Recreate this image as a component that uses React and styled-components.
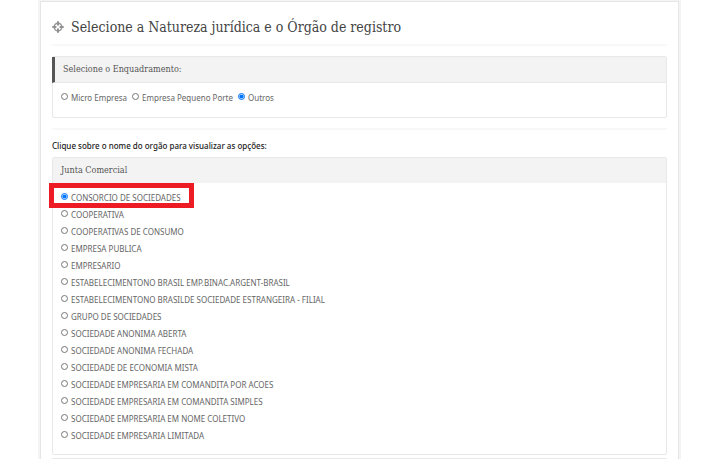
import React, { useState } from 'react'
import styled, { createGlobalStyle } from 'styled-components'

const GlobalStyle = createGlobalStyle`
    * {
        box-sizing: border-box;
    }

    body {
        margin: 0;
        background: white;
        color: #666;
        font-family: 'Noto Sans', 'Open Sans', sans-serif;
        font-size: 8px;
        line-height: 17px;
        overflow: hidden;
    }
`

const Page = styled.div`
    padding: 1px 41px 0px 40px;
`

const Card = styled.main`
    border: 1px solid #e6e6e6;
    box-shadow: 0 0 0 2px #f4f4f4;
    background: white;
    padding: 0px 11px;
`

const Header = styled.header`
    display: flex;
    align-items: center;
    gap: 7px;
    height: 42px;
    padding-top: 8px;
`

const Title = styled.h1`
    margin: 0;
    color: #444;
    font-family: 'DejaVu Serif Condensed', 'DejaVu Serif', serif;
    font-size: 14px;
    font-weight: 400;
    line-height: 17px;
`

const Divider = styled.hr`
    height: 2px;
    margin: ${props => props.$gap || 0}px 0 0 0;
    border: none;
    background: #f8f8f8;
`

const Panel = styled.section`
    margin-top: ${props => props.$gap}px;
    border: 1px solid #e8e8e8;
    border-radius: 2px;
`

const PanelTitle = styled.h2`
    margin: ${props => (props.$accent ? '0 0 0 -1px' : '0')};
    padding: 4px 8px;
    background: #f3f3f3;
    border-left: ${props => (props.$accent ? '3px solid #555' : 'none')};
    border-bottom: ${props => (props.$accent ? '1px solid #e8e8e8' : 'none')};
    color: #555;
    font-family: 'DejaVu Serif Condensed', 'DejaVu Serif', serif;
    font-size: 9px;
    font-weight: 400;
    line-height: 17px;
`

const Choices = styled.div`
    display: flex;
    gap: 5px;
    padding: 6px 8px 11px 8px;
`

const OptionList = styled.ul`
    list-style: none;
    margin: 0;
    padding: 6px 8px 10px 8px;
`

const OptionItem = styled.li`
    position: relative;
    display: flex;
`

const Option = styled.label`
    display: flex;
    align-items: center;
    gap: 3px;
    white-space: nowrap;
`

const Radio = styled.input`
    width: 7px;
    height: 7px;
    margin: 0 0 2px 0;
`

const Highlight = styled.span`
    position: absolute;
    top: -6px;
    left: -12px;
    width: 145px;
    height: 25px;
    border: 5px solid #ed1c24;
    pointer-events: none;
`

const Instruction = styled.p`
    margin: 7px 0 0 0;
    color: #222;
    font-weight: 500;
`

const sizes = ['Micro Empresa', 'Empresa Pequeno Porte', 'Outros']

const natures = [
    'CONSORCIO DE SOCIEDADES',
    'COOPERATIVA',
    'COOPERATIVAS DE CONSUMO',
    'EMPRESA PUBLICA',
    'EMPRESARIO',
    'ESTABELECIMENTONO BRASIL EMP.BINAC.ARGENT-BRASIL',
    'ESTABELECIMENTONO BRASILDE SOCIEDADE ESTRANGEIRA - FILIAL',
    'GRUPO DE SOCIEDADES',
    'SOCIEDADE ANONIMA ABERTA',
    'SOCIEDADE ANONIMA FECHADA',
    'SOCIEDADE DE ECONOMIA MISTA',
    'SOCIEDADE EMPRESARIA EM COMANDITA POR ACOES',
    'SOCIEDADE EMPRESARIA EM COMANDITA SIMPLES',
    'SOCIEDADE EMPRESARIA EM NOME COLETIVO',
    'SOCIEDADE EMPRESARIA LIMITADA',
]

const CrosshairIcon = () => (
    <svg width='12' height='12' viewBox='0 0 12 12' fill='none' stroke='#929292' aria-hidden='true'>
        <circle cx='6' cy='6' r='3.8' strokeWidth='1.4' />
        <path d='M6 0.3V4.4M6 7.6V11.7M0.3 6H4.4M7.6 6H11.7' strokeWidth='2' />
    </svg>
)

const RadioOption = ({ name, value, selected, onSelect }) => (
    <Option>
        <Radio
            type='radio'
            name={name}
            value={value}
            checked={selected === value}
            onChange={() => onSelect(value)}
        />
        {value}
    </Option>
)

const App = () => {
    const [size, setSize] = useState('Outros')
    const [nature, setNature] = useState(natures[0])

    return (
        <>
            <GlobalStyle />
            <Page>
                <Card>
                    <Header>
                        <CrosshairIcon />
                        <Title>Selecione a Natureza jurídica e o Órgão de registro</Title>
                    </Header>
                    <Divider />

                    <Panel $gap={10}>
                        <PanelTitle $accent>Selecione o Enquadramento:</PanelTitle>
                        <Choices>
                            {sizes.map(item => (
                                <RadioOption key={item} name='size' value={item} selected={size} onSelect={setSize} />
                            ))}
                        </Choices>
                    </Panel>

                    <Divider $gap={10} />
                    <Instruction>Clique sobre o nome do orgão para visualizar as opções:</Instruction>

                    <Panel $gap={3}>
                        <PanelTitle>Junta Comercial</PanelTitle>
                        <OptionList>
                            {natures.map((item, index) => (
                                <OptionItem key={item}>
                                    <RadioOption name='nature' value={item} selected={nature} onSelect={setNature} />
                                    {index === 0 && <Highlight />}
                                </OptionItem>
                            ))}
                        </OptionList>
                    </Panel>
                    <Panel as='div' $gap={3} />
                </Card>
            </Page>
        </>
    )
}

export default App
